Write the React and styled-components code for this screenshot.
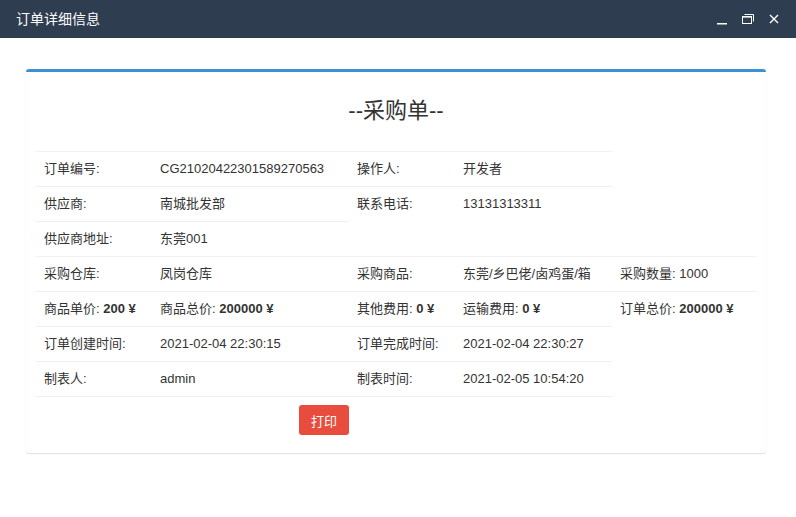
import React from 'react';
import styled, { createGlobalStyle } from 'styled-components';

const GlobalStyle = createGlobalStyle`
  html, body {
    margin: 0;
    padding: 0;
    background: #fff;
  }
  body {
    font-family: "Liberation Sans", Arial, "Noto Sans CJK SC", sans-serif;
    color: #333;
  }
`;

const Window = styled.div`
  width: 796px;
  height: 517px;
  background: #fff;
  overflow: hidden;
`;

const TitleBar = styled.div`
  height: 38px;
  background: #2e3d50;
  display: flex;
  align-items: center;
  justify-content: space-between;
  padding: 0 16px;
  box-sizing: border-box;
`;

const Title = styled.div`
  color: #fff;
  font-size: 14px;
  line-height: 38px;
`;

const Controls = styled.div`
  display: flex;
  align-items: center;
  gap: 10px;
  margin-right: -2px;
`;

const ControlBtn = styled.span`
  width: 16px;
  height: 16px;
  display: flex;
  align-items: center;
  justify-content: center;
  cursor: pointer;
`;

const Content = styled.div`
  padding: 31px 30px 0 26px;
`;

const Box = styled.div`
  border-top: 3px solid #3c91d4;
  border-radius: 3px;
  background: #fff;
  box-shadow: 0 1px 1px rgba(0, 0, 0, 0.12);
  padding: 10px;
`;

const Heading = styled.h3`
  margin: 0;
  padding: 18px 0 29px;
  font-size: 22px;
  line-height: 22px;
  font-weight: normal;
  text-align: center;
  color: #333;
`;

const Table = styled.table`
  width: 720px;
  table-layout: fixed;
  border-collapse: collapse;
  font-size: 13px;
`;

const Td = styled.td`
  padding: 8px;
  line-height: 18px;
  border-top: 1px solid #f0f0f0;
  white-space: nowrap;
  overflow: hidden;
  text-align: ${p => (p.$center ? 'center' : 'left')};
  vertical-align: top;
`;

const Strong = styled.b`
  font-weight: bold;
`;

const PrintButton = styled.button`
  width: 50px;
  height: 30px;
  border: none;
  border-radius: 3px;
  background: #e74c3c;
  color: #fff;
  font-size: 13px;
  font-family: inherit;
  cursor: pointer;
  padding: 0;
  display: block;
  margin: 0 auto;
`;

const rows = [
  [['订单编号:'], ['CG21020422301589270563'], ['操作人:'], ['开发者']],
  [['供应商:'], ['南城批发部'], ['联系电话:'], ['13131313311']],
  [['供应商地址:'], ['东莞001']],
  [['采购仓库:'], ['凤岗仓库'], ['采购商品:'], ['东莞/乡巴佬/卤鸡蛋/箱'], ['采购数量: 1000']],
  [
    ['商品单价: ', '200 ¥'],
    ['商品总价: ', '200000 ¥'],
    ['其他费用: ', '0 ¥'],
    ['运输费用: ', '0 ¥'],
    ['订单总价: ', '200000 ¥'],
  ],
  [['订单创建时间:'], ['2021-02-04 22:30:15'], ['订单完成时间:'], ['2021-02-04 22:30:27']],
  [['制表人:'], ['admin'], ['制表时间:'], ['2021-02-05 10:54:20']],
];

const colWidths = [116, 197, 106, 157, 144];

export default function App() {
  return (
    <Window>
      <GlobalStyle />
      <TitleBar>
        <Title>订单详细信息</Title>
        <Controls>
          <ControlBtn>
            <svg width="12" height="12" viewBox="0 0 12 12">
              <rect x="1" y="10" width="10" height="1.5" fill="#fff" />
            </svg>
          </ControlBtn>
          <ControlBtn>
            <svg width="14" height="12" viewBox="0 0 14 12">
              <path d="M3.5 1.5 H12.5 V8.5" fill="none" stroke="#fff" strokeWidth="1" />
              <rect x="1.5" y="3.5" width="9" height="7" fill="none" stroke="#fff" strokeWidth="1" />
              <line x1="1" y1="3.8" x2="11" y2="3.8" stroke="#fff" strokeWidth="1.6" />
            </svg>
          </ControlBtn>
          <ControlBtn>
            <svg width="10" height="10" viewBox="0 0 10 10">
              <path d="M1 1 L9 9 M9 1 L1 9" stroke="#fff" strokeWidth="1.4" />
            </svg>
          </ControlBtn>
        </Controls>
      </TitleBar>
      <Content>
        <Box>
          <Heading>--采购单--</Heading>
          <Table>
            <colgroup>
              {colWidths.map((w, i) => (
                <col key={i} style={{ width: w }} />
              ))}
            </colgroup>
            <tbody>
              {rows.map((cells, ri) => (
                <tr key={ri}>
                  {cells.map(([label, bold], ci) => (
                    <Td key={ci}>
                      {label}
                      {bold && <Strong>{bold}</Strong>}
                    </Td>
                  ))}
                </tr>
              ))}
              <tr>
                <Td colSpan={4} $center>
                  <PrintButton>打印</PrintButton>
                </Td>
              </tr>
            </tbody>
          </Table>
        </Box>
      </Content>
    </Window>
  );
}
